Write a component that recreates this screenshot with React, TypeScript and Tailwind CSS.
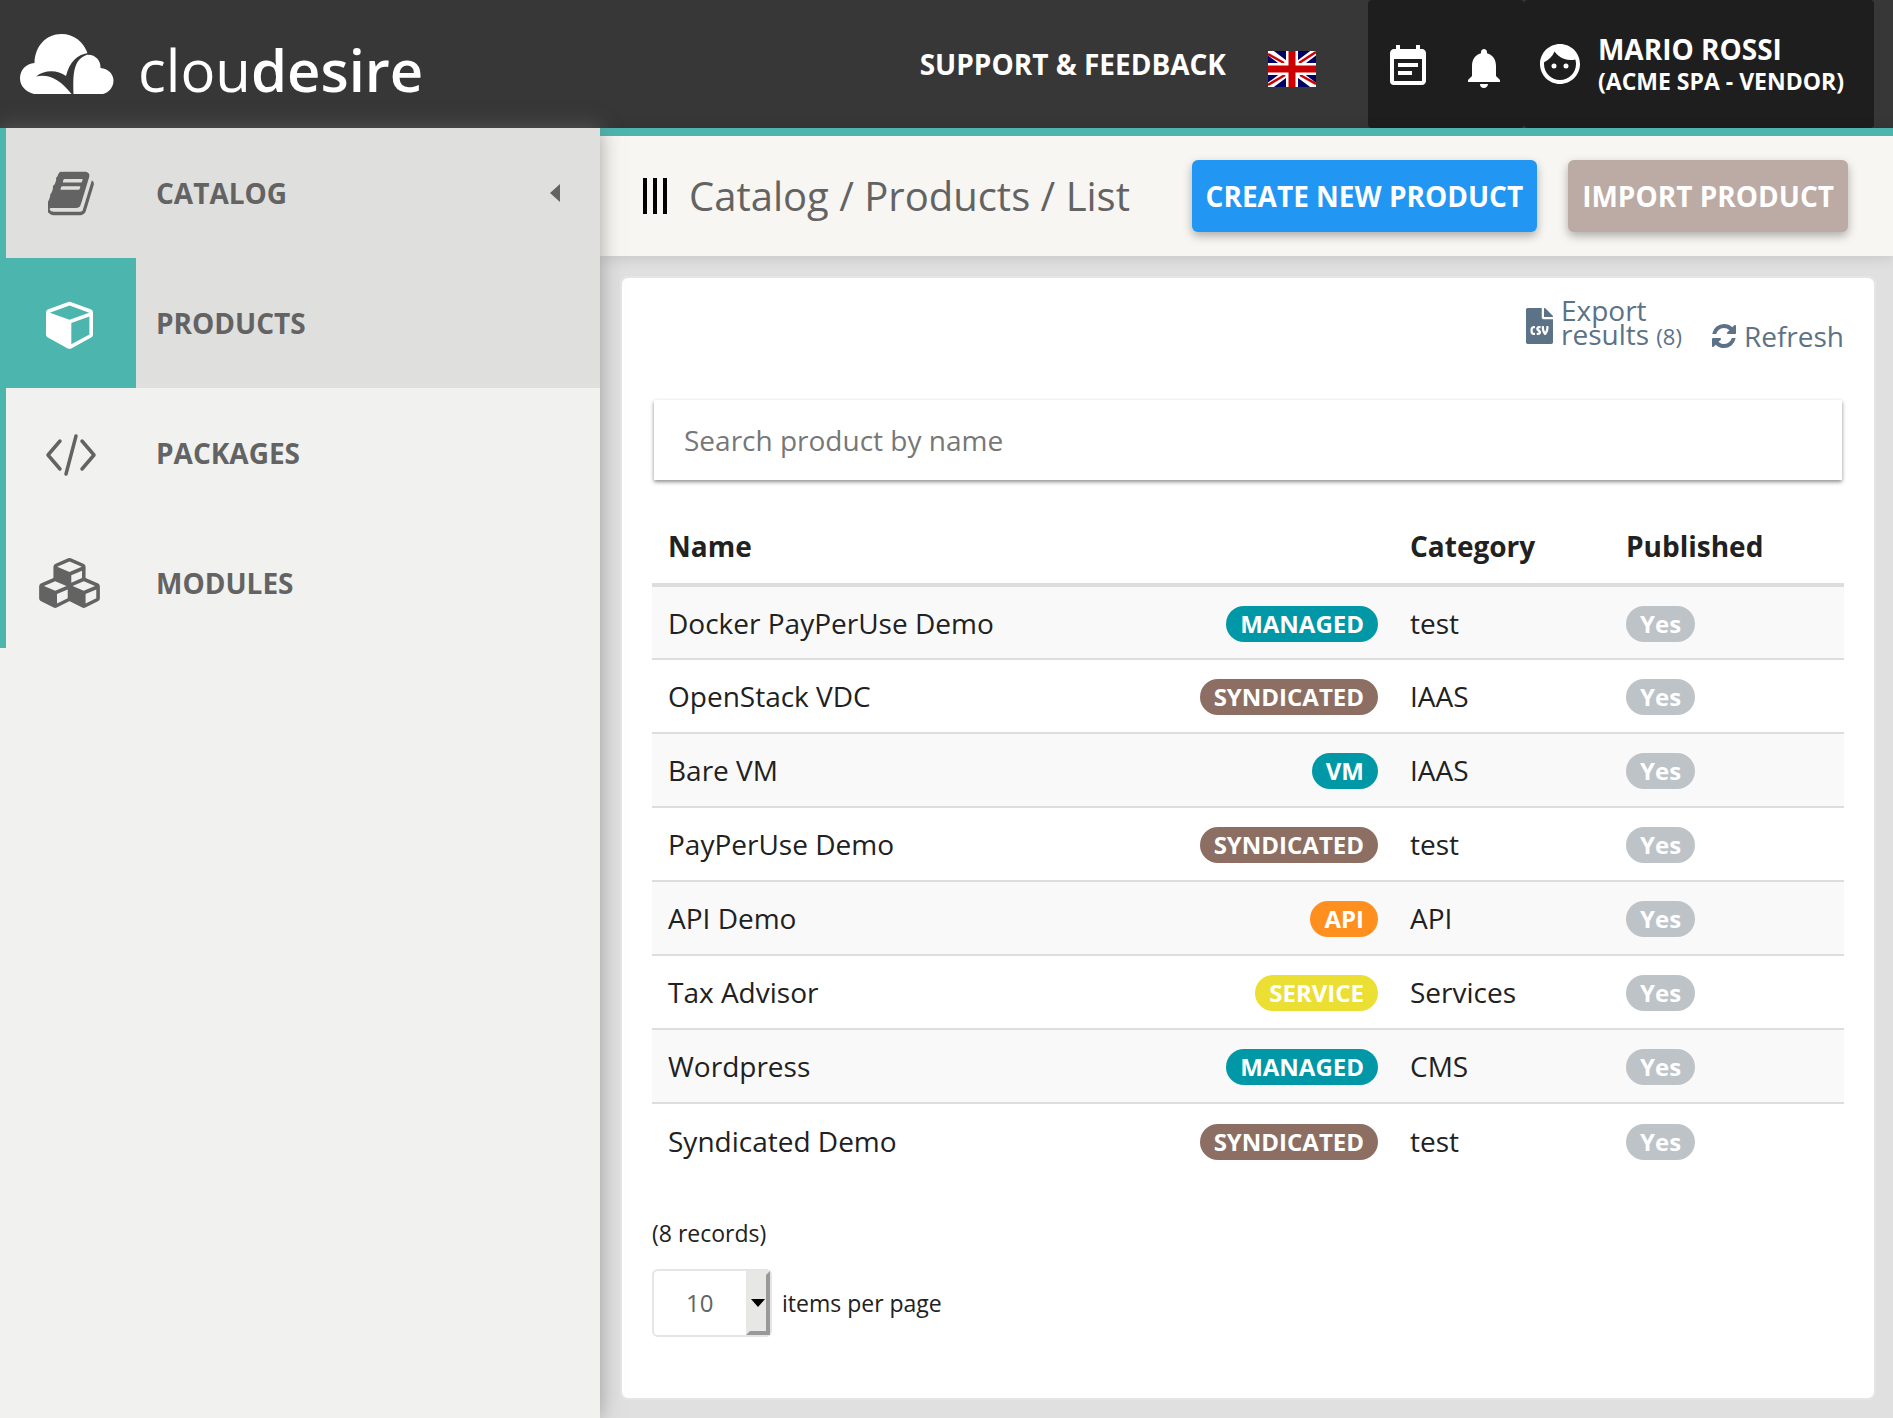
import type { ReactNode } from "react";
import { FaFileCsv } from "react-icons/fa";
import { MdEventNote, MdFace, MdNotifications } from "react-icons/md";

function Glyph({ d, viewBox, className }: { d: string; viewBox: string; className: string }) {
  return (
    <svg viewBox={viewBox} className={className} fill="currentColor" aria-hidden="true">
      <path d={d} />
    </svg>
  );
}

const BOOK =
  "M1639 478q40 57 18 129l-275 906q-19 64-76.5 107.5t-122.5 43.5h-923q-77 0-148.500-53.500t-99.500-131.500q-24-67-2-127 0-4 3-27t4-37q1-8-3-21.500t-3-19.500q2-11 8-21t16.500-23.500 16.500-23.500q23-38 45-91.500t30-91.500q3-10 .5-30t-.5-28q3-11 17-28t17-23q21-36 42-92t25-90q1-9-2.500-32t.5-28q4-13 22-30.500t22-22.500q19-26 42.500-84.500t27.500-96.500q1-8-3-25.500t-2-26.500q2-8 9-18t18-23 17-21q8-12 16.500-30.500t15-35 16-36 19.500-32 26.500-23.500 36-11.500 47.500 5.500l-1 3q38-9 51-9h761q74 0 114 56t18 130l-274 906q-36 119-71.500 153.500t-128.500 34.500h-869q-27 0-38 15-11 16-1 43 24 70 144 70h923q29 0 56-15.500t35-41.500l300-987q7-22 5-57 38 15 59 43zm-1064 2q-4 13 2 22.500t20 9.500h608q13 0 25.500-9.500t16.500-22.500l21-64q4-13-2-22.500t-20-9.500h-608q-13 0-25.500 9.500t-16.500 22.500zm-83 256q-4 13 2 22.500t20 9.500h608q13 0 25.500-9.500t16.500-22.500l21-64q4-13-2-22.500t-20-9.500h-608q-13 0-25.500 9.500t-16.500 22.500z";
const CUBE =
  "M896 1629l640-349v-636l-640 233v752zm-64-865l698-254-698-254-698 254zm832-252v768q0 35-18 65t-49 47l-704 384q-28 16-61 16t-61-16l-704-384q-31-17-49-47t-18-65v-768q0-40 23-73t61-47l704-256q22-8 44-8t44 8l704 256q38 14 61 47t23 73z";
const CUBES =
  "M640 1632l384-192v-314l-384 164v342zm-64-454l404-173-404-173-404 173zm1088 454l384-192v-314l-384 164v342zm-64-454l404-173-404-173-404 173zm-448-293l384-165v-266l-384 164v267zm-64-379l441-189-441-189-441 189zm1088 518v416q0 36-19 67t-52 47l-448 224q-25 14-57 14t-57-14l-448-224q-5-2-7-4-2 2-7 4l-448 224q-25 14-57 14t-57-14l-448-224q-33-16-52-47t-19-67v-416q0-38 21.500-70t56.500-48l434-186v-400q0-38 21.500-70t56.500-48l448-192q23-10 50-10t50 10l448 192q35 16 56.500 48t21.500 70v400l434 186q36 16 57 48t21 70z";
const REFRESH =
  "M1639 1056q0 5-1 7-64 268-268 434.500t-478 166.500q-146 0-282.500-55t-243.500-157l-129 129q-19 19-45 19t-45-19-19-45v-448q0-26 19-45t45-19h448q26 0 45 19t19 45-19 45l-137 137q71 66 161 102t187 36q134 0 250-65t186-179q11-17 53-117 8-23 30-23h192q13 0 22.500 9.500t9.500 22.500zm25-800v448q0 26-19 45t-45 19h-448q-26 0-45-19t-19-45 19-45l138-138q-148-137-349-137-134 0-250 65t-186 179q-11 17-53 117-8 23-30 23h-199q-13 0-22.500-9.500t-9.500-22.500v-7q65-268 270-434.500t480-166.500q146 0 284 55.500t245 156.500l130-129q19-19 45-19t45 19 19 45z";

function Logo() {
  return (
    <a href="#home" className="flex items-center gap-6 text-white" aria-label="cloudesire">
      <svg viewBox="0 0 94 60" className="h-15 w-[94px]" aria-hidden="true">
        <path
          fill="#fff"
          d="M14 60C6 58 0 52 0 44.500C0 36 6 29.500 14.500 29C15 12 26 0 41.500 0C54 0 64 8 68 20.500C76 21 81 27 80.500 34C88 34.500 93.500 40 93.500 46.500C93.500 53 89 58.500 83 60Z"
        />
        <path
          fill="#373737"
          d="M68 19C57 21 50 27 46 42C38 36.500 26 35 16 42.500C28 39.500 40 45 51.500 60H53.500C53 45 53 33 59 26C62 22.500 66 20.500 70 20.500Z"
        />
      </svg>
      <span className="mt-3 text-[58px] leading-[60px]">
        <span className="font-normal">clou</span>
        <span className="font-semibold">desire</span>
      </span>
    </a>
  );
}

function Flag() {
  return (
    <svg viewBox="0 0 48 36" className="h-9 w-12" aria-hidden="true">
      <path fill="#006" d="M0 0h48v36H0z" />
      <path stroke="#fff" strokeWidth="7" d="M0 0L48 36M48 0L0 36" />
      <path stroke="#c00" strokeWidth="2.500" d="M0 3L16 12M32 24L48 33M48 1L31 12M17 24L0 34" />
      <path fill="#fff" d="M18 0h12v36H18zM0 12h48v12H0z" />
      <path fill="#c00" d="M20.500 0h7v36h-7zM0 14.500h48v7H0z" />
    </svg>
  );
}

function Header() {
  return (
    <header className="flex h-32 items-stretch justify-between bg-[#373737] pr-[19px] pl-5 font-bold text-white">
      <Logo />
      <div className="flex items-stretch">
        <a href="#support" className="self-center text-[28px] leading-10">
          SUPPORT &amp; FEEDBACK
        </a>
        <button type="button" aria-label="Language: English" className="mt-2.5 mr-[52px] ml-[42px] self-center">
          <Flag />
        </button>
        <div className="flex items-center gap-7 rounded bg-[#1e1e1e] px-4">
          <button type="button" aria-label="Events" className="mt-1.5">
            <MdEventNote size={48} />
          </button>
          <button type="button" aria-label="Notifications" className="mt-2">
            <MdNotifications size={48} />
          </button>
        </div>
        <button type="button" className="flex items-center gap-3.5 rounded bg-[#1e1e1e] pr-[30px] pl-3 text-left">
          <MdFace size={48} />
          <span className="flex flex-col pb-0.5">
            <span className="text-[28px] leading-9">MARIO ROSSI</span>
            <span className="text-[23px] leading-7">(ACME SPA - VENDOR)</span>
          </span>
        </button>
      </div>
    </header>
  );
}

function MenuItem({ icon, label, state, caret }: { icon: ReactNode; label: string; state?: "open" | "current"; caret?: boolean }) {
  return (
    <li>
      <a
        href={`#${label.toLowerCase()}`}
        className={`flex h-[130px] items-center border-l-[6px] border-[#4cb5ae] pr-10 text-[28px] font-bold ${state ? "bg-[#dfdfdd]" : ""}`}
      >
        <span
          className={`flex h-full w-[130px] items-center justify-center pr-1 ${state === "current" ? "bg-[#4cb5ae] text-white" : ""}`}
        >
          {icon}
        </span>
        <span className="ml-5 flex-1">{label}</span>
        {caret && <Glyph viewBox="0 0 10 18" className="h-[18px] w-2.5" d="M10 0v18L0 9z" />}
      </a>
    </li>
  );
}

function Sidebar() {
  return (
    <nav className="relative z-10 w-[600px] shrink-0 bg-[#f1f1ef] text-[#636363] shadow-[0_0_20px_rgba(110,110,110,0.62)]">
      <ul>
        <MenuItem icon={<Glyph d={BOOK} viewBox="64 0 1664 1792" className="ml-1.5 h-[51px] w-12" />} label="CATALOG" state="open" caret />
        <MenuItem icon={<Glyph d={CUBE} viewBox="0 0 1664 1896" className="mt-1 h-[54px] w-[47px]" />} label="PRODUCTS" state="current" />
        <MenuItem
          icon={
            <svg viewBox="0 0 52 46" className="mt-1 ml-1 h-[46px] w-[52px]" fill="none" stroke="currentColor" strokeWidth="3.500" aria-hidden="true">
              <path strokeLinecap="round" strokeLinejoin="round" d="M15 9L3 23L15 37M37 9L49 23L37 37M31 4L21 42" />
            </svg>
          }
          label="PACKAGES"
        />
        <MenuItem icon={<Glyph d={CUBES} viewBox="0 0 2176 1792" className="h-[50px] w-[61px]" />} label="MODULES" />
      </ul>
    </nav>
  );
}

function Toolbar() {
  const button = "h-18 rounded-md px-3.5 text-[28px] font-bold text-white shadow-[0_4px_10px_rgba(0,0,0,0.3)]";
  return (
    <div className="flex h-32 items-center border-t-8 border-[#4cb5ae] bg-[#f7f6f2] pr-[45px] pl-[43px] shadow-[0_2px_14px_rgba(0,0,0,0.12)]">
      <button type="button" aria-label="Toggle menu" className="flex h-9 gap-1.5">
        <span className="w-1 bg-black" />
        <span className="w-1 bg-black" />
        <span className="w-1 bg-black" />
      </button>
      <h1 className="ml-5.5 flex-1 text-[40px] text-[#636363]">Catalog / Products / List</h1>
      <div className="flex gap-[31px]">
        <button type="button" className={`${button} bg-[#2196f3]`}>
          CREATE NEW PRODUCT
        </button>
        <button type="button" className={`${button} bg-[#bcaaa4]`}>
          IMPORT PRODUCT
        </button>
      </div>
    </div>
  );
}

const BADGES = {
  MANAGED: "bg-[#0097a7]",
  VM: "bg-[#0097a7]",
  SYNDICATED: "bg-[#8d6e63]",
  API: "bg-[#ff8f1f]",
  SERVICE: "bg-[#ebdf33]",
  Yes: "bg-[#bdc3c7]",
};

function Badge({ label }: { label: keyof typeof BADGES }) {
  return (
    <span className={`mb-0.5 inline-block h-9 rounded-full px-3.5 align-middle text-[24px] leading-9 font-bold text-white ${BADGES[label]}`}>
      {label}
    </span>
  );
}

const PRODUCTS: { name: string; type: keyof typeof BADGES; category: string }[] = [
  { name: "Docker PayPerUse Demo", type: "MANAGED", category: "test" },
  { name: "OpenStack VDC", type: "SYNDICATED", category: "IAAS" },
  { name: "Bare VM", type: "VM", category: "IAAS" },
  { name: "PayPerUse Demo", type: "SYNDICATED", category: "test" },
  { name: "API Demo", type: "API", category: "API" },
  { name: "Tax Advisor", type: "SERVICE", category: "Services" },
  { name: "Wordpress", type: "MANAGED", category: "CMS" },
  { name: "Syndicated Demo", type: "SYNDICATED", category: "test" },
];

function ProductTable() {
  return (
    <table className="mt-7 w-full border-collapse text-left text-[28px] leading-10">
      <thead>
        <tr className="h-[77px] border-b-4 border-[#ddd]">
          <th className="px-4" scope="col">
            Name
          </th>
          <td />
          <th className="w-54 px-4" scope="col">
            Category
          </th>
          <th className="w-[234px] px-4" scope="col">
            Published
          </th>
        </tr>
      </thead>
      <tbody>
        {PRODUCTS.map((product) => (
          <tr key={product.name} className="h-[74px] border-b-2 border-[#ddd] last:border-b-0 odd:bg-[#f9f9f9]">
            <td className="px-4">{product.name}</td>
            <td className="px-4 text-right">
              <Badge label={product.type} />
            </td>
            <td className="px-4">{product.category}</td>
            <td className="px-4">
              <Badge label="Yes" />
            </td>
          </tr>
        ))}
      </tbody>
    </table>
  );
}

function Pager() {
  return (
    <div className="mt-10 text-[23px] leading-8">
      <p>(8 records)</p>
      <div className="mt-5 flex items-center gap-2.5">
        <div className="relative flex h-17 w-30 rounded-md border-2 border-[#e5e5e5]">
          <select id="page-size" defaultValue="10" className="w-full appearance-none pl-8 text-[24px] text-[#636363]">
            <option>10</option>
            <option>25</option>
            <option>50</option>
          </select>
          <span className="pointer-events-none absolute inset-y-0 right-0 flex w-6 items-center justify-center border-4 border-t-[#e7e7e5] border-r-[#999] border-b-[#999] border-l-[#e7e7e5] bg-[#e7e7e5] text-black">
            <Glyph viewBox="0 0 14 8" className="h-2 w-3.5" d="M0 0h14L7 8z" />
          </span>
        </div>
        <label htmlFor="page-size">items per page</label>
      </div>
    </div>
  );
}

export default function App() {
  return (
    <div className="flex min-h-screen flex-col bg-[#e0e0e0] font-['Open_Sans',sans-serif] text-[#212121]">
      <Header />
      <div className="flex flex-1">
        <Sidebar />
        <main className="flex min-w-0 flex-1 flex-col">
          <Toolbar />
          <section className="mt-5 mr-[17px] mb-[18px] ml-5 flex-1 rounded-lg border-2 border-[#e5e5e5] bg-white px-[30px] pt-5">
            <div className="flex h-[102px] items-start justify-end text-[28px] text-[#5b7287]">
              <a href="#export" className="flex">
                <FaFileCsv className="mt-2.5 mr-2 h-9 w-[27px]" />
                <span className="flex flex-col leading-6">
                  <span>Export</span>
                  <span>
                    results <small className="text-[22px]">(8)</small>
                  </span>
                </span>
              </a>
              <a href="#refresh" className="mt-[26px] ml-[30px] flex leading-6">
                <Glyph d={REFRESH} viewBox="128 128 1536 1536" className="mr-2 h-6 w-6" />
                Refresh
              </a>
            </div>
            <div className="px-0.5">
              <input
                type="search"
                aria-label="Search product by name"
                placeholder="Search product by name"
                className="block h-20 w-full bg-white px-[30px] text-[28px] shadow-[0_2px_4px_rgba(0,0,0,0.45)] placeholder:text-[#777]"
              />
            </div>
            <ProductTable />
            <Pager />
          </section>
        </main>
      </div>
    </div>
  );
}
